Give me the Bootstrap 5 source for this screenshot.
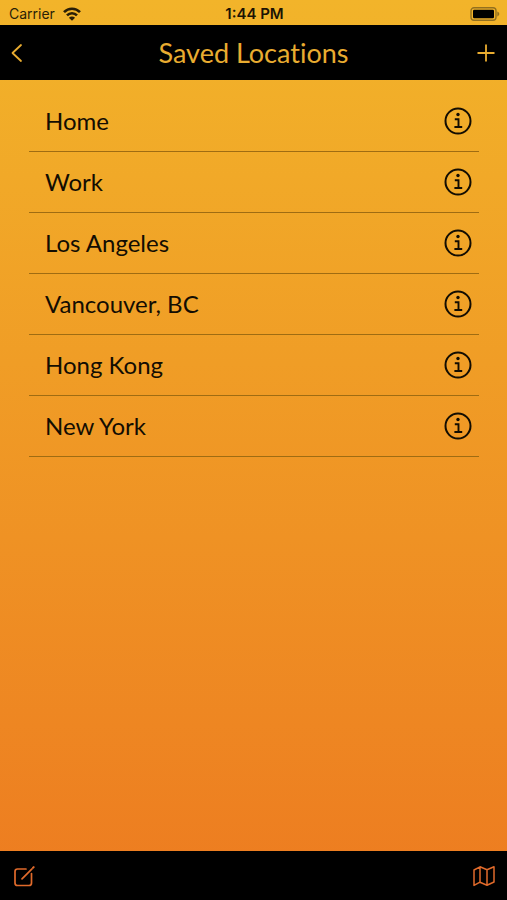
<!DOCTYPE html>
<html lang="en">
<head>
<meta charset="utf-8">
<meta name="viewport" content="width=device-width, initial-scale=1">
<title>Saved Locations</title>
<link href="https://cdn.jsdelivr.net/npm/bootstrap@5.3.0/dist/css/bootstrap.min.css" rel="stylesheet">
<style>
  :root { --amber: #e9ac30; --orange: #e06a2b; }
  body { font-family: Futura, Lato, "Liberation Sans", sans-serif; font-variant-ligatures: none; background: linear-gradient(#f2b42a, #ed7b20); color: #130d02; }
  .status { height: 25px; padding: 2px 7px 0 9px; font: 14px/24px Inter, "Liberation Sans", sans-serif; color: #2a1f07; }
  .clock { font-size: 15px; font-weight: 600; color: #1c1404; }
  .topbar { height: 55px; background: #000; color: var(--amber); }
  .topbar h1 { font-size: 27px; line-height: 55px; }
  .bar-btn { width: 36px; height: 48px; color: inherit; border: 0; }
  .places { margin: 11px 28px 0 29px; }
  .place { height: 61px; border-bottom: 1px solid #9f6c12; padding: 0 7px 0 16px; font-size: 24px; }
  .info-btn { color: inherit; border: 0; }
  .bottombar { height: 49px; background: #000; color: var(--orange); }
  svg { display: block; fill: none; stroke: currentColor; }
</style>
<script src="https://cdn.jsdelivr.net/npm/bootstrap@5.3.0/dist/js/bootstrap.bundle.min.js"></script>
</head>
<body class="d-flex flex-column min-vh-100">
<svg class="d-none" aria-hidden="true">
  <symbol id="info" viewBox="0 0 28 28">
    <circle cx="14" cy="14" r="12.5" stroke-width="2"/>
    <circle cx="14" cy="7.5" r="1.7" fill="currentColor" stroke="none"/>
    <path d="M10.800 12.200h3.700V20M10.400 20h7.800" stroke-width="1.900"/>
  </symbol>
</svg>
<div class="status row g-0 align-items-center">
  <div class="col d-flex align-items-center gap-2"><span>Carrier</span>
    <svg width="18" height="14" viewBox="0 0 18 14" stroke-width="2.6" aria-label="Wi-Fi"><path d="M1 5.2C5.400.6 12.600.6 17 5.200M4 8.400c2.800-2.900 7.200-2.900 10 0"/><path d="M9 13.800 5.900 10.800c1.700-1.700 4.500-1.700 6.200 0z" fill="currentColor" stroke="none"/></svg>
  </div>
  <div class="col-auto clock">1:44 PM</div>
  <div class="col d-flex justify-content-end">
    <svg width="30" height="14" viewBox="0 0 30 14" aria-label="Battery"><rect x="1" y=".8" width="25" height="12.400" rx="3" stroke="#93701f" stroke-width="1.400"/><rect x="3" y="2.800" width="21" height="8.400" rx="1.200" fill="#000" stroke="none"/><path d="M27.300 4.600c2.600.8 2.600 4 0 4.800z" fill="#93701f" stroke="none"/></svg>
  </div>
</div>
<header class="topbar d-flex align-items-center justify-content-between">
  <button type="button" class="bar-btn btn p-0 d-flex align-items-center ps-2" aria-label="Back"><svg width="18" height="20" viewBox="0 0 18 20" stroke-width="1.800" stroke-linecap="round" stroke-linejoin="round"><path d="M13 2 4.500 10 13 18"/></svg></button>
  <h1 class="m-0 fw-normal">Saved Locations</h1>
  <button type="button" class="bar-btn btn p-0 d-flex align-items-center justify-content-end pe-2" aria-label="Add location"><svg width="26" height="20" viewBox="0 0 26 20" stroke-width="1.800"><path d="M13 1.500v17M4.500 10h17"/></svg></button>
</header>
<main class="flex-grow-1">
  <ul class="places list-unstyled">
    <li class="place d-flex align-items-center justify-content-between"><span>Home</span><button type="button" class="info-btn btn p-0" aria-label="Home details"><svg width="28" height="28"><use href="#info"/></svg></button></li>
    <li class="place d-flex align-items-center justify-content-between"><span>Work</span><button type="button" class="info-btn btn p-0" aria-label="Work details"><svg width="28" height="28"><use href="#info"/></svg></button></li>
    <li class="place d-flex align-items-center justify-content-between"><span>Los Angeles</span><button type="button" class="info-btn btn p-0" aria-label="Los Angeles details"><svg width="28" height="28"><use href="#info"/></svg></button></li>
    <li class="place d-flex align-items-center justify-content-between"><span>Vancouver, BC</span><button type="button" class="info-btn btn p-0" aria-label="Vancouver details"><svg width="28" height="28"><use href="#info"/></svg></button></li>
    <li class="place d-flex align-items-center justify-content-between"><span>Hong Kong</span><button type="button" class="info-btn btn p-0" aria-label="Hong Kong details"><svg width="28" height="28"><use href="#info"/></svg></button></li>
    <li class="place d-flex align-items-center justify-content-between"><span>New York</span><button type="button" class="info-btn btn p-0" aria-label="New York details"><svg width="28" height="28"><use href="#info"/></svg></button></li>
  </ul>
</main>
<footer class="bottombar d-flex align-items-center justify-content-between px-2">
  <button type="button" class="bar-btn btn p-0 d-flex align-items-center ps-1" aria-label="Edit"><svg width="24" height="24" viewBox="0 0 24 24" stroke-width="1.700" stroke-linecap="round" stroke-linejoin="round"><path d="M14 5H5.500Q3 5 3 7.500V19q0 2.500 2.500 2.500H17q2.500 0 2.500-2.500V9.500M10 14.800 20 4.800" /><path d="m21 3.800.7-.7" stroke-width="2"/></svg></button>
  <button type="button" class="bar-btn btn p-0 d-flex align-items-center justify-content-end" aria-label="Map"><svg width="30" height="24" viewBox="0 0 30 24" stroke-width="1.500" stroke-linejoin="round"><path d="m5 6 6-3.200 7 3 7-3V18l-7 3.200-7-3-6 3.200zM11 2.800v15.400M18 5.800v15.400"/></svg></button>
</footer>
</body>
</html>
